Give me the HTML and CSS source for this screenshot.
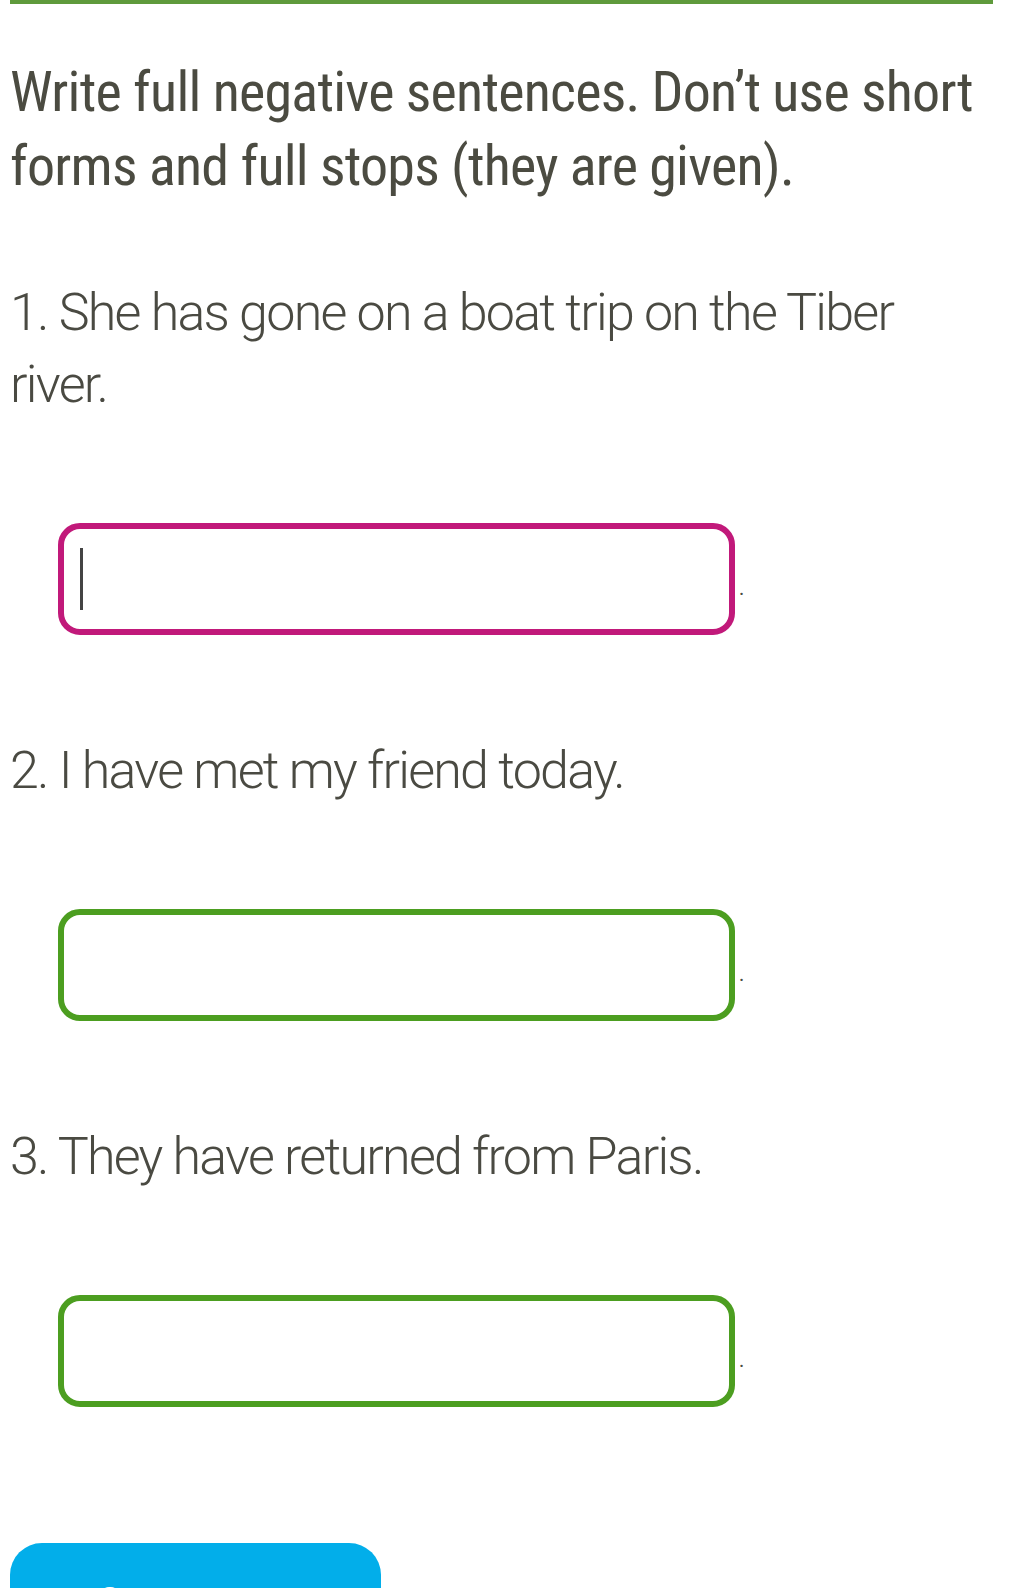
FILE: index.html
```html
<!DOCTYPE html>
<html lang="en">
<head>
    <meta charset="UTF-8">
    <meta name="viewport" content="width=device-width, initial-scale=1.0">
    <title>Negative sentences</title>
    <link rel="stylesheet" href="styles.css">
</head>
<body>
    <div class="top-line"></div>
    <div class="exercise">
        <h2 class="task-title">Write full negative sentences. Don’t use short forms and full stops (they are given).</h2>

        <div class="task">
            <p class="prompt">1. She has gone on a boat trip on the Tiber river.</p>
            <div class="answer">
                <div class="field active"><span class="caret"></span></div>
                <span class="stop">.</span>
            </div>
        </div>

        <div class="task">
            <p class="prompt">2. I have met my friend today.</p>
            <div class="answer">
                <div class="field"></div>
                <span class="stop">.</span>
            </div>
        </div>

        <div class="task">
            <p class="prompt">3. They have returned from Paris.</p>
            <div class="answer">
                <div class="field"></div>
                <span class="stop">.</span>
            </div>
        </div>

        <button class="save-btn">Сохранить</button>
    </div>
</body>
</html>
```

FILE: styles.css
```css
body {
    font-family: Roboto, sans-serif;
    margin: 0;
    background: #ffffff;
    color: #4a4a42;
    overflow: hidden;
}
.top-line {
    height: 4px;
    margin: 0 27px 0 10px;
    background: #5f9a3c;
}
.exercise {
    padding: 0 27px 0 10px;
}
.task-title {
    font-family: "Roboto Condensed", Roboto, sans-serif;
    font-stretch: condensed;
    font-size: 56px;
    font-weight: 400;
    line-height: 74px;
    letter-spacing: -0.76px;
    margin: 51px 0 0;
    color: #4b4b41;
}
.task {
    margin-top: 74px;
}
.task + .task {
    margin-top: 100px;
}
.prompt {
    font-size: 52px;
    font-weight: 300;
    line-height: 72px;
    letter-spacing: -1.75px;
    margin: 0;
}
.answer {
    display: flex;
    align-items: flex-end;
    margin: 102px 0 0 48px;
}
.field {
    box-sizing: border-box;
    width: 677px;
    height: 112px;
    border: 6px solid #4c9e20;
    border-radius: 22px;
    display: flex;
    align-items: center;
    padding-left: 16px;
}
.field.active {
    border-color: #c1197a;
}
.caret {
    width: 3px;
    height: 62px;
    background: #444444;
}
.stop {
    font-size: 20px;
    line-height: 20px;
    margin: 0 0 37px 4px;
}
.save-btn {
    margin-top: 136px;
    width: 371px;
    height: 120px;
    border: none;
    border-radius: 32px;
    background: #02aeea;
    color: #ffffff;
    font-family: Roboto, sans-serif;
    font-size: 40px;
    line-height: 40px;
    padding: 40px 0 0;
    display: flex;
    align-items: flex-start;
    justify-content: center;
    cursor: pointer;
}
```
